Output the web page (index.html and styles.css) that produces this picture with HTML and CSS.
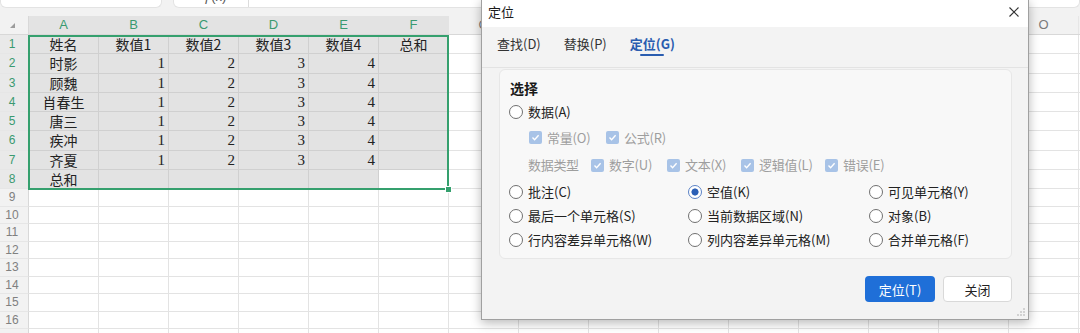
FILE: index.html
```html
<!DOCTYPE html>
<html lang="zh-CN">
<head>
<meta charset="utf-8">
<title>定位</title>
<link rel="stylesheet" href="styles.css">
</head>
<body>
<div class="app">
  <div class="topbar">
    <div class="namebox"></div>
    <div class="formula"><span class="fx">ƒ(x)</span><span class="fsep"></span></div>
  </div>
  <div class="sheet">
    <div class="hdr">
      <div class="corner"><span class="tri"></span></div>
      <div class="ch sel">A</div><div class="ch sel">B</div><div class="ch sel">C</div><div class="ch sel">D</div><div class="ch sel">E</div><div class="ch sel">F</div>
      <div class="ch">G</div><div class="ch">H</div><div class="ch">I</div><div class="ch">J</div><div class="ch">K</div><div class="ch">L</div><div class="ch">M</div><div class="ch">N</div><div class="ch">O</div><div class="hfill"></div>
    </div>
    <div class="row big">
      <div class="rh sel">1</div>
      <div class="c t">姓名</div><div class="c t">数值1</div><div class="c t">数值2</div><div class="c t">数值3</div><div class="c t">数值4</div><div class="c t">总和</div>
      <div class="rest"></div>
    </div>
    <div class="row big">
      <div class="rh sel">2</div>
      <div class="c t">时影</div><div class="c n">1</div><div class="c n">2</div><div class="c n">3</div><div class="c n">4</div><div class="c"></div>
      <div class="rest"></div>
    </div>
    <div class="row big">
      <div class="rh sel">3</div>
      <div class="c t">顾魏</div><div class="c n">1</div><div class="c n">2</div><div class="c n">3</div><div class="c n">4</div><div class="c"></div>
      <div class="rest"></div>
    </div>
    <div class="row big">
      <div class="rh sel">4</div>
      <div class="c t">肖春生</div><div class="c n">1</div><div class="c n">2</div><div class="c n">3</div><div class="c n">4</div><div class="c"></div>
      <div class="rest"></div>
    </div>
    <div class="row big">
      <div class="rh sel">5</div>
      <div class="c t">唐三</div><div class="c n">1</div><div class="c n">2</div><div class="c n">3</div><div class="c n">4</div><div class="c"></div>
      <div class="rest"></div>
    </div>
    <div class="row big">
      <div class="rh sel">6</div>
      <div class="c t">疾冲</div><div class="c n">1</div><div class="c n">2</div><div class="c n">3</div><div class="c n">4</div><div class="c"></div>
      <div class="rest"></div>
    </div>
    <div class="row big">
      <div class="rh sel">7</div>
      <div class="c t">齐夏</div><div class="c n">1</div><div class="c n">2</div><div class="c n">3</div><div class="c n">4</div><div class="c"></div>
      <div class="rest"></div>
    </div>
    <div class="row big">
      <div class="rh sel">8</div>
      <div class="c t">总和</div><div class="c"></div><div class="c"></div><div class="c"></div><div class="c"></div><div class="c active"></div>
      <div class="rest"></div>
    </div>
    <div class="row small"><div class="rh">9</div><div class="rest"></div></div>
    <div class="row small"><div class="rh">10</div><div class="rest"></div></div>
    <div class="row small"><div class="rh">11</div><div class="rest"></div></div>
    <div class="row small"><div class="rh">12</div><div class="rest"></div></div>
    <div class="row small"><div class="rh">13</div><div class="rest"></div></div>
    <div class="row small"><div class="rh">14</div><div class="rest"></div></div>
    <div class="row small"><div class="rh">15</div><div class="rest"></div></div>
    <div class="row small"><div class="rh">16</div><div class="rest"></div></div>
    <div class="row small"><div class="rh"></div><div class="rest"></div></div>
    <div class="selection"><span class="handle"></span></div>
  </div>

  <div class="dialog">
    <div class="titlebar">
      <span class="title">定位</span>
      <svg class="close" width="10" height="10" viewBox="0 0 10 10"><path d="M0.5 0.5L9.5 9.5M9.5 0.5L0.5 9.5" stroke="#333" stroke-width="1.1" fill="none"/></svg>
    </div>
    <div class="tabs">
      <span class="tab">查找(D)</span>
      <span class="tab">替换(P)</span>
      <span class="tab on">定位(G)</span>
    </div>
    <div class="card">
      <div class="legend">选择</div>
      <div class="radio"><span class="rb"></span>数据(A)</div>
      <div class="sub kinds">
        <span class="chk"><span class="cb"><svg width="9" height="9" viewBox="0 0 9 9"><path d="M1.5 4.6L3.6 6.7L7.6 2.3" stroke="#fff" stroke-width="1.4" fill="none"/></svg></span>常量(O)</span>
        <span class="chk"><span class="cb"><svg width="9" height="9" viewBox="0 0 9 9"><path d="M1.5 4.6L3.6 6.7L7.6 2.3" stroke="#fff" stroke-width="1.4" fill="none"/></svg></span>公式(R)</span>
      </div>
      <div class="sub types">
        <span class="gray">数据类型</span>
        <span class="chk"><span class="cb"><svg width="9" height="9" viewBox="0 0 9 9"><path d="M1.5 4.6L3.6 6.7L7.6 2.3" stroke="#fff" stroke-width="1.4" fill="none"/></svg></span>数字(U)</span>
        <span class="chk"><span class="cb"><svg width="9" height="9" viewBox="0 0 9 9"><path d="M1.5 4.6L3.6 6.7L7.6 2.3" stroke="#fff" stroke-width="1.4" fill="none"/></svg></span>文本(X)</span>
        <span class="chk"><span class="cb"><svg width="9" height="9" viewBox="0 0 9 9"><path d="M1.5 4.6L3.6 6.7L7.6 2.3" stroke="#fff" stroke-width="1.4" fill="none"/></svg></span>逻辑值(L)</span>
        <span class="chk"><span class="cb"><svg width="9" height="9" viewBox="0 0 9 9"><path d="M1.5 4.6L3.6 6.7L7.6 2.3" stroke="#fff" stroke-width="1.4" fill="none"/></svg></span>错误(E)</span>
      </div>
      <div class="radios3">
        <div class="radio"><span class="rb"></span>批注(C)</div>
        <div class="radio"><span class="rb on"></span>空值(K)</div>
        <div class="radio"><span class="rb"></span>可见单元格(Y)</div>
      </div>
      <div class="radios3">
        <div class="radio"><span class="rb"></span>最后一个单元格(S)</div>
        <div class="radio"><span class="rb"></span>当前数据区域(N)</div>
        <div class="radio"><span class="rb"></span>对象(B)</div>
      </div>
      <div class="radios3">
        <div class="radio"><span class="rb"></span>行内容差异单元格(W)</div>
        <div class="radio"><span class="rb"></span>列内容差异单元格(M)</div>
        <div class="radio"><span class="rb"></span>合并单元格(F)</div>
      </div>
    </div>
    <div class="actions">
      <span class="btn primary">定位(T)</span>
      <span class="btn secondary">关闭</span>
    </div>
    <svg class="grip" width="8" height="8" viewBox="0 0 8 8"><circle cx="7" cy="1" r="0.7" fill="#999"/><circle cx="4" cy="4" r="0.7" fill="#999"/><circle cx="7" cy="4" r="0.7" fill="#999"/><circle cx="1" cy="7" r="0.7" fill="#999"/><circle cx="4" cy="7" r="0.7" fill="#999"/><circle cx="7" cy="7" r="0.7" fill="#999"/></svg>
  </div>
</div>
</body>
</html>
```
FILE: styles.css
```css
* { box-sizing: border-box; margin: 0; padding: 0; }
body { margin: 0; background: #fff; font-family: "Noto Sans CJK SC", "Noto Sans", sans-serif; }

.app { position: relative; width: 1080px; height: 333px; overflow: hidden; background: #fff; }

/* top bar */
.topbar { display: flex; gap: 11px; height: 16px; background: #f2f2f2; }
.namebox { width: 162px; height: 8px; background: #fff; border: 1px solid #e3e3e3; border-top: 0; border-radius: 0 0 6px 6px; }
.formula { flex: 1; height: 8px; background: #fff; border: 1px solid #e3e3e3; border-top: 0; border-radius: 0 0 6px 6px; overflow: hidden; display: flex; align-items: flex-start; }
.fx { font: 13px/16px "Liberation Sans", sans-serif; color: #555; margin: -11px 0 0 30px; }
.fsep { width: 1px; height: 8px; background: #dcdcdc; margin-left: 22px; }

/* sheet */
.sheet { position: relative; }
.hdr { display: flex; height: 19px; background: #f2f2f2; border-bottom: 1px solid #d8d8d8; }
.corner { width: 29px; flex: none; position: relative; border-right: 1px solid #d8d8d8; }
.tri { position: absolute; left: 10px; top: 7px; width: 0; height: 0; border-left: 5px solid transparent; border-bottom: 5px solid #9c9c9c; }
.ch { width: 70px; flex: none; text-align: center; font: 13px/18px "Liberation Sans", sans-serif; color: #7a7a7a; border-right: 1px solid #e6e6e6; }
.ch.sel { background: #e3e3e3; color: #3a9a70; border-right-color: #e3e3e3; }
.hfill { flex: 1; }

.row { display: flex; }
.row.big { height: 19.25px; }
.row.small { height: 17.5px; }
.rh { width: 29px; flex: none; display: flex; align-items: center; justify-content: center; padding-right: 4px; background: #f2f2f2; border-right: 1px solid #d8d8d8; border-bottom: 1px solid #e6e6e6; font: 12px/14px "Liberation Sans", sans-serif; color: #808080; }
.rh.sel { background: #e9e9e9; color: #3a9a70; }
.c { width: 70px; flex: none; display: flex; align-items: center; overflow: hidden; white-space: nowrap; background: #e3e3e3; border-right: 1px solid #d0d0d0; border-bottom: 1px solid #d0d0d0; color: #222; }
.c.t { justify-content: center; font: 14px/18px "Noto Sans CJK SC", sans-serif; }
.c.n { justify-content: flex-end; padding-right: 3px; font: 15px/18px "Liberation Serif", serif; }
.c.active { background: #fff; }
.rest { flex: 1; border-bottom: 1px solid #e3e3e3; background: linear-gradient(90deg, transparent 69px, #e3e3e3 69px) 0 0 / 70px 100% repeat-x; }

.selection { position: absolute; left: 28px; top: 19px; width: 421px; height: 155px; border: 2px solid #35a06e; }
.handle { position: absolute; right: -5px; bottom: -5px; width: 7px; height: 7px; background: #35a06e; border: 1px solid #fff; }

/* dialog */
.dialog { position: absolute; left: 481px; top: -1px; width: 548px; height: 321px; background: #f3f3f3; border: 1px solid #a0a0a0; box-shadow: 0 3px 10px rgba(0, 0, 0, 0.28); display: flex; flex-direction: column; }
.titlebar { height: 27px; flex: none; background: #fff; display: flex; align-items: center; justify-content: space-between; padding: 0 9px 3px 6px; font-size: 13px; color: #1a1a1a; }
.title { line-height: 18px; }
.tabs { height: 41px; flex: none; display: flex; align-items: flex-start; gap: 23px; padding: 8px 0 0 15px; border-bottom: 1px solid #e3e3e3; }
.tab { position: relative; font-size: 13px; line-height: 18px; color: #333; }
.tab.on { color: #2a5db0; font-weight: 600; }
.tab.on::after { content: ""; position: absolute; left: 50%; top: 19px; width: 24px; height: 2px; margin-left: -12px; background: #2a5db0; border-radius: 1px; }

.card { height: 190px; flex: none; margin: 1px 16px 0 17px; padding: 6px 0 6px 9px; background: #f8f8f8; border: 1px solid #e7e7e7; border-radius: 6px; display: grid; grid-template-rows: 24px 24px 27px 28px 25px 24px 23px; font-size: 13px; color: #222; }
.legend { display: flex; align-items: center; padding-left: 1px; font-size: 14px; font-weight: 600; color: #1a1a1a; }
.radio { display: flex; align-items: center; gap: 5px; white-space: nowrap; line-height: 18px; }
.rb { width: 14px; height: 14px; flex: none; border: 1px solid #707070; border-radius: 50%; background: #fff; }
.rb.on { border-color: #5b82c6; background: radial-gradient(circle, #2b5fb6 0, #2b5fb6 3.2px, #fff 3.9px); }
.sub { display: grid; align-items: center; padding-left: 19px; }
.sub.kinds { grid-template-columns: 77px auto; padding-left: 20px; }
.sub.types { grid-template-columns: 63px 76px 74px 84px auto; }
.chk { display: flex; align-items: center; gap: 5px; color: #9e9e9e; line-height: 18px; white-space: nowrap; letter-spacing: -0.2px; }
.cb { width: 13px; height: 13px; flex: none; border-radius: 2px; background: #a8c3e7; display: flex; align-items: center; justify-content: center; }
.gray { color: #9e9e9e; line-height: 18px; letter-spacing: -0.3px; }
.radios3 { display: grid; grid-template-columns: 179px 181px 1fr; align-items: center; }

.actions { display: flex; justify-content: flex-end; gap: 8px; margin: 17px 16px 0 0; }
.btn { height: 26px; display: flex; align-items: center; justify-content: center; border-radius: 4px; font-size: 13px; }
.btn.primary { width: 70px; background: #1f6fd8; color: #fff; }
.btn.secondary { width: 69px; background: #fff; border: 1px solid #d9d9d9; color: #222; }
.grip { position: absolute; right: 3px; bottom: 3px; }
```
